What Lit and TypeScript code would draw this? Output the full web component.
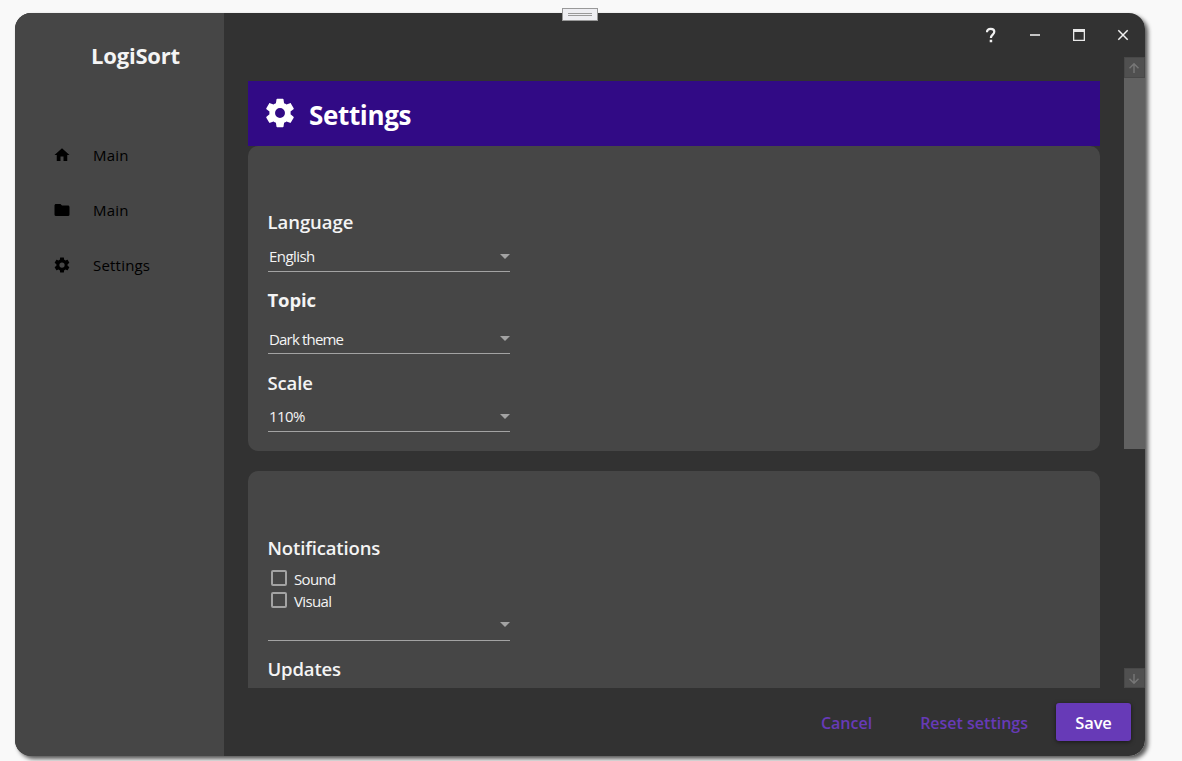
import { LitElement, html, css, svg } from "lit";
import { customElement, property } from "lit/decorators.js";
import { classMap } from "lit/directives/class-map.js";

const ICONS: Record<string, string> = {
  home: "M10,20V14H14V20H19V12H22L12,3L2,12H5V20H10Z",
  folder: "M10,4H4C2.89,4 2,4.89 2,6V18A2,2 0 0,0 4,20H20A2,2 0 0,0 22,18V8C22,6.89 21.1,6 20,6H12L10,4Z",
  cog: "M12,15.5A3.5,3.5 0 0,1 8.5,12A3.5,3.5 0 0,1 12,8.5A3.5,3.5 0 0,1 15.5,12A3.5,3.5 0 0,1 12,15.5M19.43,12.97C19.47,12.65 19.5,12.33 19.5,12C19.5,11.67 19.47,11.34 19.43,11L21.54,9.37C21.73,9.22 21.78,8.95 21.66,8.73L19.66,5.27C19.54,5.05 19.27,4.96 19.05,5.05L16.56,6.05C16.04,5.66 15.5,5.32 14.87,5.07L14.5,2.42C14.46,2.18 14.25,2 14,2H10C9.75,2 9.54,2.18 9.5,2.42L9.13,5.07C8.5,5.32 7.96,5.66 7.44,6.05L4.95,5.05C4.73,4.96 4.46,5.05 4.34,5.27L2.34,8.73C2.21,8.95 2.27,9.22 2.46,9.37L4.57,11C4.53,11.34 4.5,11.67 4.5,12C4.5,12.33 4.53,12.65 4.57,12.97L2.46,14.63C2.27,14.78 2.21,15.05 2.34,15.27L4.34,18.73C4.46,18.95 4.73,19.03 4.95,18.95L7.44,17.94C7.96,18.34 8.5,18.68 9.13,18.93L9.5,21.58C9.54,21.82 9.75,22 10,22H14C14.25,22 14.46,21.82 14.5,21.58L14.87,18.93C15.5,18.67 16.04,18.34 16.56,17.94L19.05,18.95C19.27,19.03 19.54,18.95 19.66,18.73L21.66,15.27C21.78,15.05 21.73,14.78 21.54,14.63L19.43,12.97Z",
};

@customElement("glyph-icon")
export class GlyphIcon extends LitElement {
  static styles = css`
    :host { display: block; flex: none; }
    svg { display: block; width: 100%; height: 100%; fill: currentColor; }
  `;
  @property() name = "home";
  render() {
    return html`<svg viewBox="0 0 24 24">${svg`<path d=${ICONS[this.name]}></path>`}</svg>`;
  }
}

@customElement("select-field")
export class SelectField extends LitElement {
  static styles = css`
    :host { display: flex; flex-direction: column; justify-content: flex-end; width: 242px; box-sizing: border-box; border-bottom: 1px solid #a3a3a3; }
    .row { display: flex; align-items: center; justify-content: space-between; height: 20px; padding-left: 1px; margin-bottom: 5px; }
    .empty { margin-bottom: 6px; }
    .value { font-size: 15px; line-height: 20px; color: #f4f4f4; white-space: nowrap; letter-spacing: -0.55px; }
    .tight { letter-spacing: -0.82px; padding-top: 2px; }
    svg { display: block; width: 10px; height: 5px; fill: #a3a3a3; }
  `;
  @property() value = "";
  render() {
    return html`<div class=${classMap({ row: true, empty: !this.value })}>
      <span class=${classMap({ value: true, tight: this.value.length > 8 })}>${this.value}</span>
      <svg viewBox="0 0 10 5"><path d="M0 0H10L5 5Z"></path></svg>
    </div>`;
  }
}

@customElement("app-root")
export class AppRoot extends LitElement {
  static styles = css`
    :host { display: block; box-sizing: border-box; width: 1182px; height: 761px; padding: 13px 0 0 15px; background: #f9f9f9; overflow: hidden; position: relative; font-family: "Open Sans", "Noto Sans", sans-serif; color: #f4f4f4; }
    .window { display: grid; grid-template-columns: 209px 1fr; width: 1130px; height: 743px; border-radius: 16px; overflow: hidden; background: #323232; }
    .shade { width: 1130px; height: 743px; border-radius: 16px; box-shadow: 3px 3px 4px rgba(0,0,0,.65); }
    .grip { position: absolute; left: 562px; top: 8px; width: 36px; height: 13px; box-sizing: border-box; border: 1px solid #999; background: #eeeef2; display: flex; flex-direction: column; align-items: center; justify-content: center; gap: 1px; }
    .grip i { display: block; width: 24px; height: 1px; background: #999; }

    .side { background: #464646; display: flex; flex-direction: column; }
    .brand { margin: 27px 0 57px 76px; height: 30px; line-height: 30px; font-size: 22px; font-weight: 700; letter-spacing: -.2px; }
    .item { display: flex; align-items: center; height: 55px; padding-left: 38px; gap: 22px; color: #000; font-size: 15px; letter-spacing: .2px; }
    .item glyph-icon { width: 18px; height: 18px; }
    .item span { line-height: 20px; margin-top: 1px; }

    .main { display: grid; grid-template-rows: 44px 631px 68px; min-width: 0; }
    .caption { display: flex; justify-content: flex-end; }
    .caption svg { width: 44px; height: 44px; display: block; }

    .body { display: grid; grid-template-columns: 1fr 21px; min-height: 0; }
    .scroll { padding: 24px 24px 0; overflow: hidden; }
    .banner { display: flex; align-items: center; height: 65px; box-sizing: border-box; padding: 0 0 2px 15px; gap: 12px; background: #310a85; color: #fff; }
    .banner glyph-icon { width: 34px; height: 34px; }
    .banner h1 { margin: 4px 0 0; font-size: 26px; line-height: 34px; font-weight: 700; letter-spacing: -.35px; }
    .card { background: #464646; border-radius: 10px; box-sizing: border-box; padding: 62px 20px 19px; }
    .card.second { margin-top: 20px; padding-top: 63px; height: 300px; }
    h2 { margin: 0 0 0 -.5px; height: 28px; line-height: 28px; font-size: 18.5px; font-weight: 600; letter-spacing: -.05px; }
    .dense { letter-spacing: -.15px; }
    .bold { font-weight: 700; letter-spacing: -.1px; }
    .f36 { height: 36px; margin-bottom: 14px; }
    .f40 { height: 40px; margin-bottom: 15px; }
    .f35 { height: 35px; }
    .f30 { height: 30px; margin-bottom: 14px; }
    .check { display: flex; align-items: center; height: 22px; gap: 7px; padding-left: 3px; font-size: 15px; letter-spacing: -.65px; }
    .box { width: 16px; height: 16px; box-sizing: border-box; border: 2px solid #a3a3a3; border-radius: 2px; }
    .check span { line-height: 20px; margin-top: 2px; }
    .checks { padding-top: 5px; }

    .bar { display: flex; flex-direction: column; }
    .btn { height: 21px; background: #505050; box-sizing: border-box; border: 1px solid #484848; }
    .btn.down { height: 20px; }
    .btn svg { display: block; width: 19px; height: 19px; }
    .thumb { height: 371px; background: #616161; }
    .gap { flex: 1; }

    .foot { display: flex; justify-content: flex-end; align-items: center; padding: 0 14px 0 0; font-size: 16px; font-weight: 600; color: #673ab7; }
    .foot span { line-height: 24px; margin-top: 2px; }
    .cancel { margin-right: 48px; }
    .reset { margin-right: 28px; }
    .save { display: flex; align-items: center; justify-content: center; width: 75px; height: 38px; border-radius: 3px; background: #673ab7; color: #fff; font-size: 16.5px; box-shadow: 0 1px 4px rgba(0,0,0,.55); letter-spacing: -.15px; }
    .layer { display: grid; }
    .layer > * { grid-area: 1 / 1; }
  `;

  render() {
    return html`
      <div class="layer">
        <div class="shade"></div>
        <div class="window">
          <nav class="side">
            <div class="brand">LogiSort</div>
            ${[["home", "Main"], ["folder", "Main"], ["cog", "Settings"]].map(
              ([icon, label]) => html`<div class="item"><glyph-icon name=${icon}></glyph-icon><span>${label}</span></div>`
            )}
          </nav>
          <div class="main">
            <div class="caption">
              <svg viewBox="0 0 44 44" fill="none" stroke="#f0f0f0" stroke-width="2.2"><path d="M18 19.3C18 16.8 19.4 15.8 21.8 15.8C24.2 15.8 25.3 17.1 25.3 18.8C25.3 21.6 21.9 21.8 21.9 25"></path><path d="M20.7 26.8h2.5v2.5h-2.5z" fill="#f0f0f0" stroke="none"></path></svg>
              <svg viewBox="0 0 44 44"><path d="M17 21h10v2H17z" fill="#c4c4c4"></path></svg>
              <svg viewBox="0 0 44 44"><path fill="#e8e8e8" fill-rule="evenodd" d="M16 16H28V28H16ZM17.3 19V26.8H26.7V19Z"></path></svg>
              <svg viewBox="0 0 44 44" fill="none" stroke="#f0f0f0" stroke-width="1.5"><path d="M17.3 17.3L26.7 26.7M26.7 17.3L17.3 26.7"></path></svg>
            </div>
            <div class="body">
              <div class="scroll">
                <div class="banner"><glyph-icon name="cog"></glyph-icon><h1>Settings</h1></div>
                <section class="card">
                  <h2>Language</h2>
                  <select-field class="f36" value="English"></select-field>
                  <h2 class="bold">Topic</h2>
                  <select-field class="f40" value="Dark theme"></select-field>
                  <h2 class="dense">Scale</h2>
                  <select-field class="f35" value="110%"></select-field>
                </section>
                <section class="card second">
                  <h2 class="dense">Notifications</h2>
                  <div class="checks">
                    <div class="check"><div class="box"></div><span>Sound</span></div>
                    <div class="check"><div class="box"></div><span>Visual</span></div>
                  </div>
                  <select-field class="f30"></select-field>
                  <h2 class="dense">Updates</h2>
                </section>
              </div>
              <div class="bar">
                <div class="btn"><svg viewBox="0 0 19 19" fill="none" stroke="#777" stroke-width="1.4"><path d="M9 15V6M4.5 10.2L9 5.7L13.5 10.2"></path></svg></div>
                <div class="thumb"></div>
                <div class="gap"></div>
                <div class="btn down"><svg viewBox="0 0 19 19" fill="none" stroke="#777" stroke-width="1.4"><path d="M9 5V14M4.5 9.8L9 14.3L13.5 9.8"></path></svg></div>
              </div>
            </div>
            <footer class="foot">
              <span class="cancel">Cancel</span><span class="reset">Reset settings</span>
              <div class="save"><span>Save</span></div>
            </footer>
          </div>
        </div>
      </div>
      <div class="grip"><i></i><i></i></div>
    `;
  }
}
